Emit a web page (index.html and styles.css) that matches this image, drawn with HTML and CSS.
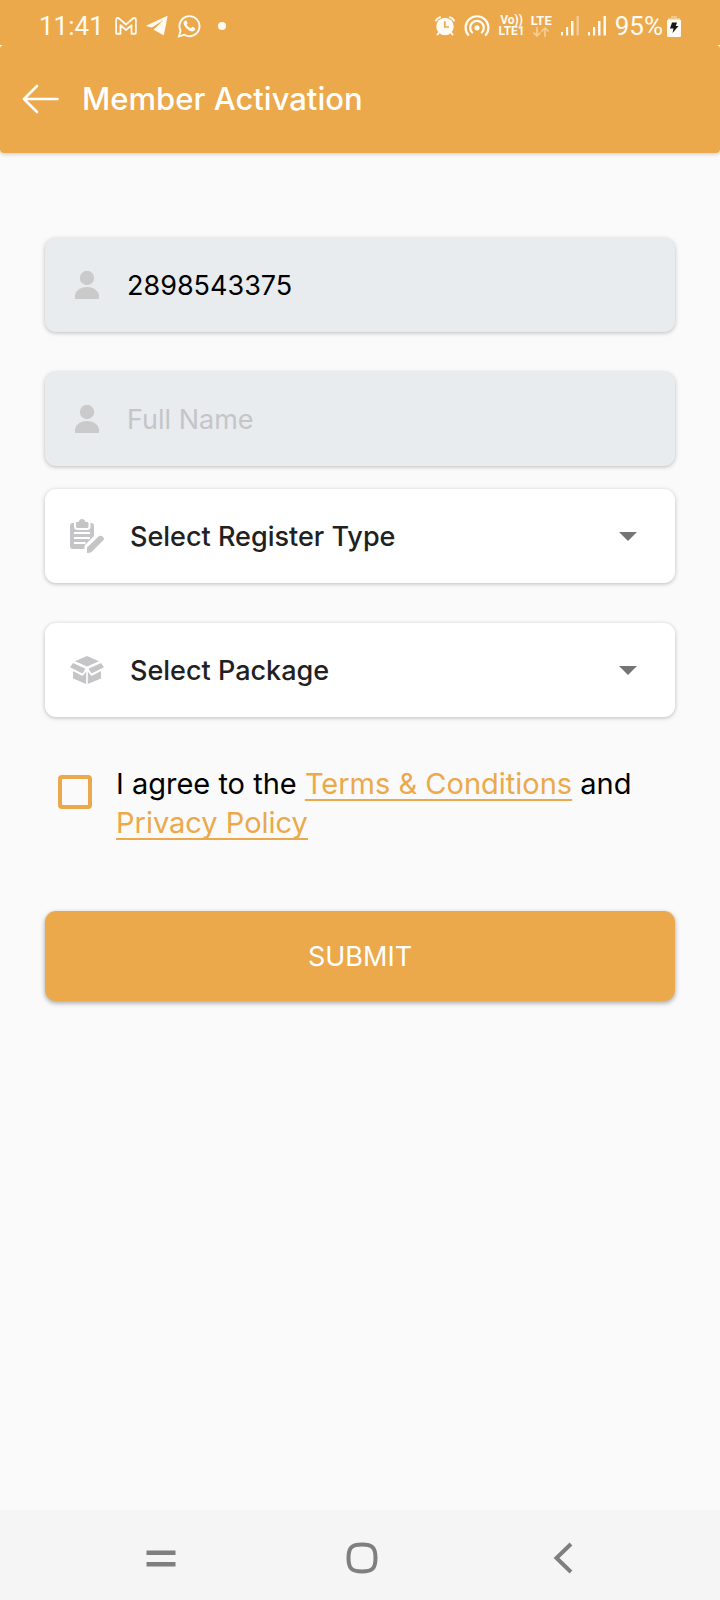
FILE: index.html
```html
<!DOCTYPE html>
<html lang="en">
<head>
<meta charset="utf-8">
<meta name="viewport" content="width=device-width, initial-scale=1">
<title>Member Activation</title>
<link rel="stylesheet" href="styles.css">
</head>
<body>
<div class="screen">
  <div class="top">
    <div class="status">
      <div class="status-side status-left">
        <span class="clock">11:41</span>
        <svg width="22" height="18" viewBox="0 0 24 18" preserveAspectRatio="none" fill="none" stroke="currentColor" stroke-width="1.900" stroke-linejoin="round"><path d="M6 16.800H2.200Q1.200 16.800 1.200 15.800V3Q1.200 1 3 1Q4 1 4.800 1.700L12 7.500L19.200 1.700Q20 1 21 1Q22.800 1 22.800 3V15.800Q22.800 16.800 21.800 16.800H18V8.200L12 13L6 8.200Z"/></svg>
        <svg width="22" height="20" viewBox="0 0 22 20" fill="currentColor"><path d="M21.600 0.400L18 18.400Q17.700 19.400 16.700 18.800L7.600 13.800L17.200 4.300L5.800 11.600L0.900 10.300Q0 9.800 1 9.200L20.400 0.200Q21.400-0.200 21.600 0.400Z"/></svg>
        <svg width="24" height="24" viewBox="0 0 24 24"><path d="M2 22.300L3.600 16.700A10 10 0 1 1 7.300 20.700Z" fill="none" stroke="currentColor" stroke-width="1.900"/><path d="M8.200 6.500Q9.300 6 9.700 7L10.600 9.100Q10.700 9.700 9.600 10.700Q11.200 13.400 14 14.300L15.100 13Q15.500 12.700 16 13L18.200 14.200Q18.500 16.800 15.600 17.400Q12.800 17.600 9.300 14.300Q6.400 11.200 6.500 9Q6.800 7.200 8.200 6.500Z" fill="currentColor"/></svg>
        <span class="dot"></span>
      </div>
      <div class="status-side status-right">
        <svg width="20" height="20" viewBox="0 0 20 20"><g fill="none" stroke="currentColor" stroke-width="2" stroke-linecap="round"><path d="M1 4.500Q2.200 2 5 1.200M19 4.500Q17.800 2 15 1.200M4.500 16L2.500 18.500M15.500 16L17.500 18.500"/></g><circle cx="10" cy="10.500" r="8.700" fill="currentColor"/><path d="M9.800 5.300V11H14" fill="none" stroke="#eba94b" stroke-width="1.700"/></svg>
        <svg width="26" height="22" viewBox="0 0 26 22" fill="none" stroke="currentColor" stroke-width="2.200" stroke-linecap="round"><path d="M4.300 20A11.400 11.400 0 1 1 21.700 20"/><path d="M8.200 17.500A6.800 6.800 0 1 1 17.800 17.500"/><circle cx="13" cy="12.800" r="2.600" fill="currentColor" stroke="none"/></svg>
        <span class="network"><span>Vo))</span><span>LTE1</span></span>
        <span class="lte"><span>LTE</span><svg width="16" height="10" viewBox="0 0 16 10" fill="none" stroke="currentColor" stroke-width="1.700" opacity=".45"><path d="M4 0V9M0.500 5.500L4 9L7.500 5.500M12 10V1M8.500 4.500L12 1L15.500 4.500"/></svg></span>
        <svg width="18" height="20" viewBox="0 0 18 20" fill="currentColor"><path d="M0 16h2v3.500H0zM5 11h2.200v8.500H5zM10 5h2.500v14.500H10z"/><path d="M15.500 0H18v19.500h-2.500z" opacity=".4"/></svg>
        <svg width="18" height="20" viewBox="0 0 18 20" fill="currentColor"><path d="M0 16h2v3.500H0zM5 11h2.200v8.500H5zM10 5h2.500v14.500H10zM15.500 0H18v19.500h-2.500z"/></svg>
        <span class="charge"><span class="clock">95%</span>
        <svg width="14" height="21" viewBox="0 0 14 21"><path d="M4 0H10V2H13V4H1V2H4Z" fill="#fff" opacity=".35"/><rect y="3.500" width="14" height="17.500" rx="1.500" fill="#fffaf3"/><path d="M5 6.500H10L8.800 10H11.500L5.500 17L6.500 12.500H3Z" fill="#181818"/></svg></span>
      </div>
    </div>
    <header class="appbar">
      <button class="back" type="button" aria-label="Back"><svg width="38" height="30" viewBox="0 0 38 30" fill="none" stroke="currentColor" stroke-width="2.600" stroke-linecap="round" stroke-linejoin="round"><path d="M15 2L2 15L15 28M2 15H35.500"/></svg></button>
      <h1>Member Activation</h1>
    </header>
  </div>

  <form class="form">
    <label class="field field-filled">
      <span class="field-icon"><svg width="24" height="28" viewBox="0 0 24 28" fill="#cacaca"><circle cx="12" cy="7" r="7.200"/><path d="M0 28V24Q2.500 16 12 16T24 24V28Z"/></svg></span>
      <input type="text" value="2898543375" aria-label="Member ID">
    </label>
    <label class="field field-filled field-name">
      <span class="field-icon"><svg width="24" height="28" viewBox="0 0 24 28" fill="#cacaca"><circle cx="12" cy="7" r="7.200"/><path d="M0 28V24Q2.500 16 12 16T24 24V28Z"/></svg></span>
      <input type="text" placeholder="Full Name" aria-label="Full Name">
    </label>
    <label class="field field-select">
      <span class="field-icon"><svg width="34" height="34" viewBox="0 0 34 34"><path d="M3 4H21Q24 4 24 7V17L14.500 26.500V30H3Q0 30 0 27V7Q0 4 3 4Z" fill="#c5c5c7"/><path d="M5 3V7.500Q5 10 8 10H17Q19.500 10 19.500 7.500V3" fill="none" stroke="#fff" stroke-width="2"/><path d="M6 3H8.500Q9.500 0 12 0T15.500 3H18V7Q18 8.500 16.500 8.500H7.500Q6 8.500 6 7Z" fill="#c5c5c7"/><path d="M4 14H20M4 19H20M4 24H15.500" stroke="#fff" stroke-width="2"/><path d="M17 28.500L28.500 17.500Q30.500 16 32.500 17.500Q35 19.500 33 21.500L21.500 33Q20.500 34 17 34Z" fill="#c5c5c7"/></svg></span>
      <select aria-label="Register type"><option>Select Register Type</option></select>
      <svg class="caret" width="18" height="9" viewBox="0 0 18 9" fill="#757575"><path d="M0 0H18L9 9Z"/></svg>
    </label>
    <label class="field field-select">
      <span class="field-icon"><svg width="34" height="28" viewBox="0 0 34 28" fill="#c5c5c7"><path d="M17 0L29 5.200L17 10.500L5 5.200Z"/><path d="M3 7L15.500 12.700L12.500 17.500L0 11.200Z"/><path d="M31 7L18.500 12.700L21.500 17.500L34 11.200Z"/><path d="M3 15L12.500 20L16.200 15.500V28L3 22.500ZM31 15L21.500 20L17.800 15.500V28L31 22.500Z"/></svg></span>
      <select aria-label="Package"><option>Select Package</option></select>
      <svg class="caret" width="18" height="9" viewBox="0 0 18 9" fill="#757575"><path d="M0 0H18L9 9Z"/></svg>
    </label>
    <div class="agree">
      <input class="check" id="agree" type="checkbox">
      <p><label for="agree">I agree to the</label> <a href="#terms">Terms &amp; Conditions</a> and <a href="#privacy">Privacy Policy</a></p>
    </div>
    <button class="submit" type="submit">SUBMIT</button>
  </form>

  <nav class="navbar">
    <button type="button" aria-label="Recent apps"><svg width="30" height="32" viewBox="0 0 30 32" fill="#7f7f7f"><path d="M0.500 8.500h29v4.500h-29zM0.500 20h29v4.500h-29z"/></svg></button>
    <button type="button" aria-label="Home"><svg width="32" height="32" viewBox="0 0 32 32" fill="none" stroke="#7f7f7f" stroke-width="4"><path d="M16 2.500C26.500 2.500 29.500 5.500 29.500 16S26.500 29.500 16 29.500S2.500 26.500 2.500 16S5.500 2.500 16 2.500Z"/></svg></button>
    <button type="button" aria-label="Back"><svg width="20" height="32" viewBox="0 0 20 32" fill="none" stroke="#7f7f7f" stroke-width="4"><path d="M18 2L3.500 16L18 30"/></svg></button>
  </nav>
</div>
</body>
</html>
```
FILE: styles.css
```css
* { box-sizing: border-box; }

body {
  margin: 0;
  background: #fafafa;
  color: #000;
  font-family: Inter, "Liberation Sans", sans-serif;
}

button, input, select { font: inherit; color: inherit; }

button { border: 0; padding: 0; background: none; cursor: pointer; }

svg { display: block; flex: none; }

.screen { min-height: 100vh; display: flex; flex-direction: column; }

.top { color: #fff; border-radius: 0 0 4px 4px; box-shadow: 0 1px 4px rgba(0, 0, 0, .2); }

.status {
  display: flex;
  justify-content: space-between;
  height: 45px;
  padding: 7px 39px 0;
  background: #eba94b;
  color: #fffaf3;
  font-family: Roboto, sans-serif;
}

.status-side { display: flex; align-items: center; height: 38px; }
.status-left { gap: 9px; }
.status-right { gap: 9px; }
.clock { font-size: 26px; line-height: 38px; }
.status-left .clock { margin-right: 2px; }
.dot { width: 8px; height: 8px; margin-left: 8px; border-radius: 50%; background: currentColor; }
.network, .lte { display: flex; flex-direction: column; align-items: center; font-weight: 700; line-height: 11px; }
.network { font-size: 12px; }
.lte { gap: 1px; font-size: 13px; margin-left: -3px; }
.charge { display: flex; align-items: center; gap: 4px; }

.appbar {
  display: flex;
  align-items: center;
  gap: 22px;
  height: 108px;
  padding: 0 22px;
  border-radius: 4px;
  background: #eba94b;
}
.appbar h1 { margin: 0; font-size: 31px; font-weight: 500; line-height: 40px; }
.back { color: #fff; }

.form { flex: 1; display: flex; flex-direction: column; padding: 85px 45px 40px; }

.field {
  display: flex;
  align-items: center;
  height: 94px;
  margin-bottom: 40px;
  padding-right: 38px;
  border-radius: 11px;
  background: #fff;
  box-shadow: 0 1px 4px rgba(0, 0, 0, .25);
}

.field-filled { background: #e8ecef; }
.field-name { margin-bottom: 23px; }
.field-icon { display: flex; justify-content: center; width: 82px; padding-left: 2px; flex: none; }
.field-select .field-icon { width: 85px; padding-right: 3px; }

.field input, .field select {
  flex: 1;
  min-width: 0;
  height: 60px;
  padding: 0;
  border: 0;
  outline: 0;
  background: none;
  font-size: 27px;
}

.field input::placeholder { color: #c5c5c7; opacity: 1; }
.field select { appearance: none; color: #212121; font-weight: 500; }
.caret { pointer-events: none; }

.agree { display: flex; align-items: flex-start; gap: 24px; margin: 7px 0 69px; padding-left: 13px; }

.check {
  appearance: none;
  flex: none;
  width: 34px;
  height: 34px;
  margin: 11px 0 0;
  border: 4px solid #eba94b;
  border-radius: 4px;
}

.check:checked { background: #eba94b; }
.agree p { margin: 0; font-size: 29px; line-height: 39px; }
.agree a {
  color: #eba94b;
  text-decoration: underline 2px;
  text-underline-offset: 5px;
  text-decoration-skip-ink: none;
}

.submit {
  height: 90px;
  border-radius: 11px;
  background: #eba94b;
  color: #fff;
  font-size: 27px;
  box-shadow: 0 2px 5px rgba(0, 0, 0, .35);
}

.navbar { display: grid; grid-template-columns: repeat(3, 1fr); height: 90px; padding: 6px 56px 0 60px; background: #f5f5f5; }
.navbar button { display: flex; justify-content: center; align-items: center; }
```
